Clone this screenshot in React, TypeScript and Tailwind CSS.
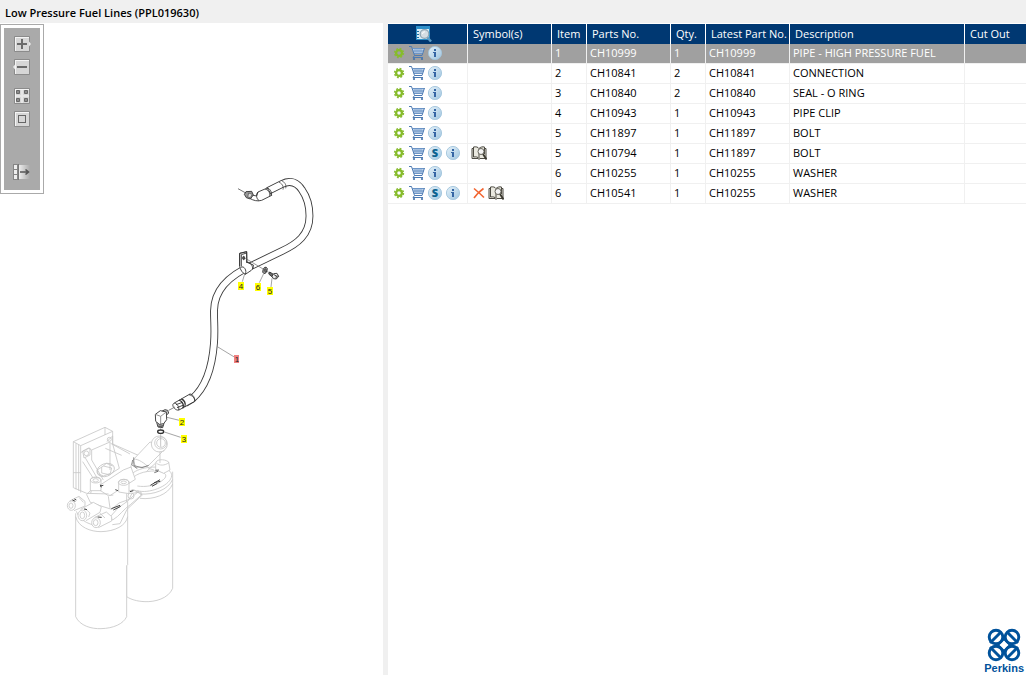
import React from "react";

type Part = {
    item: string;
    partNo: string;
    qty: string;
    latest: string;
    description: string;
    superseded?: boolean;
    symbols?: ("cross" | "book")[];
};

const parts: Part[] = [
    { item: "1", partNo: "CH10999", qty: "1", latest: "CH10999", description: "PIPE - HIGH PRESSURE FUEL" },
    { item: "2", partNo: "CH10841", qty: "2", latest: "CH10841", description: "CONNECTION" },
    { item: "3", partNo: "CH10840", qty: "2", latest: "CH10840", description: "SEAL - O RING" },
    { item: "4", partNo: "CH10943", qty: "1", latest: "CH10943", description: "PIPE CLIP" },
    { item: "5", partNo: "CH11897", qty: "1", latest: "CH11897", description: "BOLT" },
    { item: "5", partNo: "CH10794", qty: "1", latest: "CH11897", description: "BOLT", superseded: true, symbols: ["book"] },
    { item: "6", partNo: "CH10255", qty: "1", latest: "CH10255", description: "WASHER" },
    { item: "6", partNo: "CH10541", qty: "1", latest: "CH10255", description: "WASHER", superseded: true, symbols: ["cross", "book"] },
];

const callouts = [
    { label: "4", x: 241, y: 286, color: "#ffff00" },
    { label: "6", x: 258, y: 287, color: "#ffff00" },
    { label: "5", x: 270, y: 291, color: "#ffff00" },
    { label: "1", x: 237, y: 359, color: "#f08080" },
    { label: "2", x: 182, y: 422, color: "#ffff00" },
    { label: "3", x: 184, y: 439, color: "#ffff00" },
];

const GearIcon: React.FC = () => (
    <svg viewBox="0 0 12 12" className="h-3 w-3">
        <circle cx="6" cy="6" r="4.4" fill="none" stroke="#8aba3a" strokeWidth="1.6" strokeDasharray="1.9 1.556" />
        <circle cx="6" cy="6" r="2.9" fill="none" stroke="#86bc2a" strokeWidth="2.3" />
    </svg>
);

const CartIcon: React.FC = () => (
    <svg viewBox="0 0 16 16" className="h-4 w-4" fill="none">
        <path d="M3 3H15.5L13.5 9H5z" fill="#bcd2ea" />
        <path d="M3.500 3.500H15M4.500 6H14.500M5 8.500H13.500" stroke="#5a87bd" strokeWidth=".8" />
        <path d="M6 3V9M8 3V9M10 3V9M12 3V9" stroke="#6c95c6" strokeWidth=".6" />
        <path d="M0 1.500H2.500L5.500 10.500L4 12.500H14M5.500 10.500H13L15.500 3" stroke="#4c7ab3" strokeWidth="1" />
        <circle cx="5" cy="14" r="1.100" fill="#4270a8" />
        <circle cx="13" cy="14" r="1.100" fill="#4270a8" />
    </svg>
);

const Badge: React.FC<{ kind: "info" | "s" }> = ({ kind }) => (
    <svg viewBox="0 0 16 16" className="h-4 w-4">
        <defs>
            <linearGradient id={`badge-${kind}`} x1="0" y1="0" x2="1" y2="1">
                <stop offset="0" stopColor="#e6f2f9" />
                <stop offset="1" stopColor="#9fc5e0" />
            </linearGradient>
        </defs>
        <circle cx="8" cy="8" r="6.6" fill={`url(#badge-${kind})`} stroke="#a3c5dd" strokeWidth=".9" />
        {kind === "info" ? (
            <g fill="#3565a4">
                <rect x="7" y="4" width="2" height="2" />
                <path d="M6 7H9V12H7V8H6z" />
            </g>
        ) : (
            <text x="8" y="12" textAnchor="middle" fontSize="11" fontWeight="800" fill="#0c6290" className="font-['Open_Sans',sans-serif]">S</text>
        )}
    </svg>
);

const CrossIcon: React.FC = () => (
    <svg viewBox="0 0 16 16" className="h-4 w-4">
        <path d="M3 3.5C6 6 10 9.500 13 12.500M12.500 3.500C9 6 5 10 3 13" fill="none" stroke="#f26430" strokeWidth="1.6" />
    </svg>
);

const BookIcon: React.FC = () => (
    <svg viewBox="0 0 16 16" className="h-4 w-4" fill="none" stroke="#4d4b43">
        <path d="M1 3.500H2.500V2C5 1.500 7 2 8 3.500C9.500 2 11.500 1.500 13.500 2V3.500H15V13.500H9L8 14.500L7 13.500H1z" fill="#e9e8df" />
        <path d="M2.500 3V12C5 11.500 7 12 8 13.500V3.500M13.500 9V3" />
        <circle cx="10" cy="6.500" r="3" fill="#f4f4f4" stroke="#66645c" />
        <path d="M12 9L15.500 14.500" stroke="#3a382f" strokeWidth="1.800" />
    </svg>
);

const PreviewIcon: React.FC = () => (
    <svg viewBox="0 0 16 16" className="h-4 w-4">
        <rect x="0" y="0" width="14" height="14" fill="#2d8fc9" />
        <rect x="1" y="3" width="12" height="10" fill="#d8ecf7" />
        <path d="M1 5.500H3M1 8.500H3M1 11.500H3" stroke="#1c6ea6" />
        <path d="M11 11L15 15.500" stroke="#5f9cc4" strokeWidth="2.400" />
        <circle cx="8.500" cy="8" r="4.300" fill="#d5dde3" stroke="#8fa5b3" strokeWidth="1.200" />
        <path d="M6.500 8A2.200 2.200 0 0 1 9 5.800" stroke="#fff" fill="none" />
    </svg>
);

const ToolButton: React.FC<{ label: string; className?: string; children: React.ReactNode }> = ({ label, className, children }) => (
    <button type="button" aria-label={label} className={`block h-4 w-[18px] ${className ?? ""}`}>
        <svg viewBox="0 0 18 16" className="h-4 w-[18px]" fill="none">
            {children}
        </svg>
    </button>
);

const Plate: React.FC = () => (
    <>
        <rect x="1" y="0" width="16" height="16" rx="1" fill="#8b8b8b" />
        <rect x="2" y="1" width="14" height="14" fill="#f4f4f4" />
        <rect x="3" y="2" width="13" height="13" fill="#d6d6d6" />
    </>
);

const Toolbar: React.FC = () => (
    <div className="mt-px w-11 shrink-0 self-start border border-[#aaaaaa] bg-white p-[3px]">
        <div className="flex flex-col items-center bg-[#aaaaaa] pt-2 pb-[10px]">
            <ToolButton label="Zoom in">
                <Plate />
                <path d="M16 5.500L18 8L16 10.500z" fill="#e8e8e8" />
                <path d="M4 8H14M9 3V13" stroke="#6a6a6a" strokeWidth="2" />
            </ToolButton>
            <ToolButton label="Zoom out" className="mt-[7px]">
                <Plate />
                <path d="M2 5.500L0 8L2 10.500z" fill="#e8e8e8" />
                <path d="M4 8H14" stroke="#6a6a6a" strokeWidth="2" />
            </ToolButton>
            <ToolButton label="Fit page" className="mt-[13px]">
                <Plate />
                <path d="M9 2V15M3 8H16" stroke="#e6e6e6" strokeWidth="2" />
                <path d="M3.500 2.500H6.500V5.500H3.500zM11.500 2.500H14.500V5.500H11.500zM3.500 10.500H6.500V13.500H3.500zM11.500 10.500H14.500V13.500H11.500z" fill="#8c8c8c" stroke="#686868" />
            </ToolButton>
            <ToolButton label="Actual size" className="mt-[7px]">
                <Plate />
                <rect x="5.500" y="4.500" width="7" height="7" stroke="#666" />
            </ToolButton>
            <ToolButton label="Hide panel" className="mt-[37px]">
                <defs>
                    <linearGradient id="fade">
                        <stop offset="0" stopColor="#f2f2f2" />
                        <stop offset="1" stopColor="#aaaaaa" />
                    </linearGradient>
                </defs>
                <rect x="0" y="0" width="5" height="16" fill="#858585" />
                <path d="M1 1H4V5H1zM1 6H4V10H1zM1 11H4V15H1z" fill="#eee" />
                <rect x="5" y="1" width="12" height="14" fill="url(#fade)" />
                <path d="M5.500 0V16" stroke="#777" />
                <path d="M7 8H15M12.500 5.500L15.500 8L12.500 10.500" stroke="#555" strokeWidth="1.600" />
            </ToolButton>
        </div>
    </div>
);

const Illustration: React.FC = () => (
    <svg viewBox="44 23 338 617" width="338" height="617" className="shrink-0" fill="none" role="img" aria-label="Low pressure fuel lines">
        {/* filter head and canisters */}
        <g transform="translate(60 420) scale(.33333)" stroke="#c6c6c6" strokeWidth="2.500" strokeLinejoin="round">
            <path d="M338 155V505C325 536 285 546 255 545C230 544 212 538 200 530V220" fill="#fff" />
            <path d="M338 192C325 224 280 240 240 235M338 178C325 210 280 225 240 222" />
            <path d="M205 180C210 150 260 138 300 142C330 146 338 160 334 172C325 200 265 222 232 212" fill="#fff" />
            <path d="M215 178C228 158 268 150 297 154C320 158 322 169 311 178C290 198 255 202 232 198" />
            <path d="M47 280V590C60 618 95 627 123 626C160 625 190 612 200 590V437L203 434V245" fill="#fff" />
            <path d="M47 290C55 322 92 335 123 335C165 334 198 317 203 290M49 274C60 305 95 318 125 317" />

            <path d="M40 65L135 22L158 34V72L237 107L214 134L205 188L150 222L80 220L40 203z" fill="#fff" />
            <path d="M40 65L62 77L158 34M62 77V218M48 70V208M56 74V212M40 158H62M135 22V45" />
            <path d="M62 98L85 84L95 90V120L130 180M75 112L118 185M68 125L102 178L92 220M95 90L150 66V150" />
            <path d="M140 65L158 48V72M136 85L185 106M158 72L178 145L146 165M152 70L210 102" />
            <circle cx="79" cy="100" r="7" />
            <circle cx="148" cy="58" r="6" />
            <path d="M68 93L90 84V105L72 114z" />
            <ellipse cx="137" cy="150" rx="27" ry="19" transform="rotate(-20 137 150)" />
            <path d="M112 150L130 138L155 144L151 160L131 168L114 162zM125 141V159L147 164M130 138L139 130L158 138" />

            <path d="M119 196L190 150L213 141L226 178L151 226" fill="#fff" />
            <path d="M219 120L270 66L318 84L263 139L228 143z" fill="#fff" />
            <path d="M219 120C225 112 248 125 263 139M276 64L290 52M308 96L320 80" />
            <path d="M221 112L222 137L246 143L266 136M218 120L215 134L232 146" stroke="#777" />
            <circle cx="298" cy="72" r="24" fill="#fff" />
            <circle cx="302" cy="69" r="18" />
            <circle cx="303" cy="69" r="13" />
            <path d="M287 130C287 118 312 115 326 126L330 150L311 160L287 149zM289 129C299 138 314 137 327 128" fill="#fff" />
            <path d="M300 94V129M286 130L260 154M265 145L282 150" />
            <path d="M286 151L297 150M283 158L294 154" stroke="#555" />

            <path d="M91 180C91 170 123 170 123 181V212H91z" fill="#fff" />
            <ellipse cx="107" cy="180" rx="16" ry="9" />
            <ellipse cx="107" cy="181" rx="8" ry="5" />
            <path d="M176 188C177 175 206 175 207 187V221L176 216z" fill="#fff" />
            <ellipse cx="191" cy="187" rx="16" ry="9" />
            <ellipse cx="191" cy="187" rx="8" ry="4" />
            <path d="M92 211L80 224L91 247L120 257L155 268L177 249L208 238L236 214L215 209M120 211L145 227L160 225M207 213L222 210L247 225L201 268L180 311L157 314M145 229L150 264" />
            <path d="M216 220L243 216L244 225L211 254C193 265 178 289 158 300L151 290L175 263L205 242z" />
            <circle cx="213" cy="228" r="9" />

            <path d="M29 243L57 229L75 244V258L42 272" fill="#fff" />
            <ellipse cx="34" cy="257" rx="12" ry="14" fill="#fff" />
            <ellipse cx="33" cy="257" rx="6" ry="8" />
            <path d="M62 268L100 247L124 260L120 277L78 302" fill="#fff" />
            <ellipse cx="67" cy="286" rx="13" ry="16" fill="#fff" />
            <ellipse cx="67" cy="286" rx="7" ry="10" />
            <path d="M104 292L139 276L155 290V303L115 323" fill="#fff" />
            <ellipse cx="108" cy="308" rx="13" ry="15" fill="#fff" />
            <ellipse cx="107" cy="308" rx="7" ry="9" />
            <path d="M74 264L90 279L86 291M120 280L135 294M57 232L70 247" />
            <path d="M37 240L46 244M43 237L49 240M72 267L81 269M113 291L125 292M120 198L130 196M124 202L121 194M166 209L174 212M210 215L220 212M154 266L180 256M160 270L182 259M271 196L300 179M276 199L292 190M282 188L301 184" stroke="#444" strokeWidth="3" />
        </g>

        {/* hose */}
        <path d="M268 191L282 184C290 180 297 182 302 190C307 197 309.500 206 309.500 216C309.500 235 297 244 282 251L253 265C232 274 214 288 214 311C214 323 215 330 214 343C212 370 205 388 192 399L185 403" stroke="#3c3c3c" strokeWidth="7.800" />
        <path d="M267 191.500L282 184C290 180 297 182 302 190C307 197 309.500 206 309.500 216C309.500 235 297 244 282 251L253 265C232 274 214 288 214 311C214 323 215 330 214 343C212 370 205 388 192 399L184 403.500" stroke="#fff" strokeWidth="6" />

        {/* upper fitting, clip, washer and bolt */}
        <g transform="translate(190 165) scale(.33333)" stroke="#333" strokeWidth="2.700" strokeLinejoin="round">
            <path d="M144 71L169 85" stroke="#666" />
            <path d="M204 81L232 69L245 91L215 106C202 110 190 106 181 101L184 90L200 93z" fill="#fff" />
            <path d="M204 81C197 88 199 101 207 107M226 73C234 73 242 84 239 94M232 69C239 70 247 82 244 92" />
            <path d="M168 80L185 79L190 90L181 102L169 98L163 88z" fill="#999" />
            <path d="M176 84L187 88L181 98L173 96z" fill="#ddd" stroke="#666" />
            <path d="M267 52C275 54 282 64 279 74M276 48C284 51 290 60 287 70" strokeWidth="2" />
            <path d="M149 265L170 260L171 292L190 300C191 306 189 312 184 316L166 328C159 325 150 315 149 303z" fill="#fff" />
            <path d="M149 303V265L170 260V293M154 304V269L170 264M152 307C163 301 171 317 166 328M169 292C180 289 189 303 188 312" />
            <ellipse cx="161" cy="279" rx="3" ry="5" fill="#555" />
            <path d="M163 278L244 327" strokeWidth="2" stroke="#666" />
            <ellipse cx="225" cy="316" rx="6" ry="10" transform="rotate(20 225 316)" fill="#aaa" />
            <ellipse cx="226" cy="316" rx="2" ry="5" />
            <path d="M239 321L252 329L248 337L236 327z" fill="#666" />
            <path d="M251 326L261 325L266 334L259 342L250 341L246 334zM252 329L259 333L266 334M259 333L258 341" fill="#eee" />
            <path d="M164 327L157 350M221 326L208 353M246 340L243 366" stroke="#777" strokeWidth="2" />
        </g>

        {/* lower fitting, connection and seal */}
        <g transform="translate(150 300) scale(.33333)" stroke="#333" strokeWidth="2.700" strokeLinejoin="round">
            <path d="M73 309L120 282C128 282 136 294 134 304L87 330C78 333 66 320 69 313z" fill="#fff" />
            <path d="M117 284C127 286 136 296 134 304M73 309C80 309 89 322 86 330M78 314L98 307M81 323L101 315" />
            <path d="M94 297C103 300 109 311 104 321M87 300C97 304 104 316 98 325" strokeWidth="4" />
            <path d="M56 331L75 321" stroke="#777" />
            <path d="M37 333L45 329L53 331L56 339L50 345z" fill="#ccc" />
            <path d="M16 343L31 332L49 336L50 359L41 371L28 373L17 364z" fill="#fff" />
            <path d="M16 343L32 349L49 336M32 349V372" stroke="#888" />
            <path d="M20 367L24 381L38 383L42 370M23 375L40 376M25 380H38" />
            <path d="M32 383V440" stroke="#aaa" strokeWidth="2" />
            <ellipse cx="32" cy="395" rx="9" ry="5" strokeWidth="4" fill="#fff" />
            <path d="M51 352L88 361M43 396L92 412M202 140L256 173" stroke="#777" strokeWidth="2" />
        </g>

        {callouts.map((c) => (
            <g key={c.label}>
                <rect x={c.x - 3} y={c.y - 4} width={c.label === "1" ? 5 : 6} height="8" fill={c.color} />
                <text x={c.x} y={c.y + 3} textAnchor="middle" fontSize="8" fill="#222" className="font-['Liberation_Sans',sans-serif]">{c.label}</text>
            </g>
        ))}
    </svg>
);

const BrandLogo: React.FC = () => (
    <div className="mt-auto mr-[2px] flex flex-col items-center self-end text-[#00529b]">
        <svg viewBox="0 0 34 34" className="h-[34px] w-[34px]" fill="none" stroke="currentColor" strokeWidth="2.900">
            <circle cx="9" cy="9" r="6.800" />
            <circle cx="25" cy="9" r="6.800" />
            <circle cx="9" cy="25" r="6.800" />
            <circle cx="25" cy="25" r="6.800" />
            <path d="M3 15L14 4M20 4L31 15M3 19L14 30M20 30L31 19" />
            <path d="M17 11L23 17L17 23L11 17z" strokeWidth="2" />
        </svg>
        <span className="font-['Liberation_Sans',sans-serif] text-[11px] leading-[13px] font-bold">Perkins</span>
    </div>
);

const PartsTable: React.FC = () => {

    const head = "border-r border-white px-[5px] text-left font-normal";
    const cell = "border-r border-b border-[#f0f0f0] px-[3px] pt-px align-top";

    return (
        <table className="mt-px w-full table-fixed border-separate border-spacing-0 whitespace-nowrap">
            <colgroup>
                <col className="w-20" />
                <col className="w-[84px]" />
                <col className="w-[35px]" />
                <col className="w-[84px]" />
                <col className="w-[35px]" />
                <col className="w-[84px]" />
                <col className="w-[175px]" />
                <col />
            </colgroup>
            <thead>
                <tr className="h-5 bg-[#003872] text-white">
                    <th className="border-r border-white p-0">
                        <button type="button" aria-label="Preview" className="mx-auto block pr-2">
                            <PreviewIcon />
                        </button>
                    </th>
                    <th className={head}>Symbol(s)</th>
                    <th className={head}>Item</th>
                    <th className={head}>Parts No.</th>
                    <th className={head}>Qty.</th>
                    <th className={head}>Latest Part No.</th>
                    <th className={head}>Description</th>
                    <th className="px-[5px] text-left font-normal">Cut Out</th>
                </tr>
            </thead>
            <tbody>
                {parts.map((part, index) => (
                    <tr key={part.partNo} className={index === 0 ? "h-5 bg-[#a0a0a0] text-white" : "h-5"}>
                        <td className="border-r border-b border-[#f0f0f0] pt-px pl-[5px] align-top">
                            <div className="flex items-center gap-0.5">
                                <button type="button" aria-label="Options" className="mr-0.5"><GearIcon /></button>
                                <button type="button" aria-label="Add to cart"><CartIcon /></button>
                                {part.superseded && <button type="button" aria-label="Supersession"><Badge kind="s" /></button>}
                                <button type="button" aria-label="Information"><Badge kind="info" /></button>
                            </div>
                        </td>
                        <td className={cell}>
                            <div className="flex gap-px">
                                {part.symbols?.map((s) => (s === "cross" ? <CrossIcon key={s} /> : <BookIcon key={s} />))}
                            </div>
                        </td>
                        <td className={cell}>{part.item}</td>
                        <td className={cell}>{part.partNo}</td>
                        <td className={cell}>{part.qty}</td>
                        <td className={cell}>{part.latest}</td>
                        <td className={cell}>{part.description}</td>
                        <td className="border-b border-[#f0f0f0]"></td>
                    </tr>
                ))}
            </tbody>
        </table>
    );

};

export const App: React.FC = (): React.ReactElement => {

    return (

        <div className="flex min-h-screen flex-col bg-white font-['Open_Sans',sans-serif] text-[11px] leading-4 text-black">
            <header className="bg-[#f0f0f0] px-[5px] pt-[5px] pb-[2px]">
                <h1 className="font-semibold">Low Pressure Fuel Lines (PPL019630)</h1>
            </header>
            <main className="flex grow">
                <section className="flex w-[383px] shrink-0 overflow-hidden">
                    <Toolbar />
                    <Illustration />
                </section>
                <div className="w-[5px] shrink-0 bg-[#f0f0f0]"></div>
                <section className="flex min-w-0 grow flex-col">
                    <PartsTable />
                    <BrandLogo />
                </section>
            </main>
        </div>

    );

};

export default App;
